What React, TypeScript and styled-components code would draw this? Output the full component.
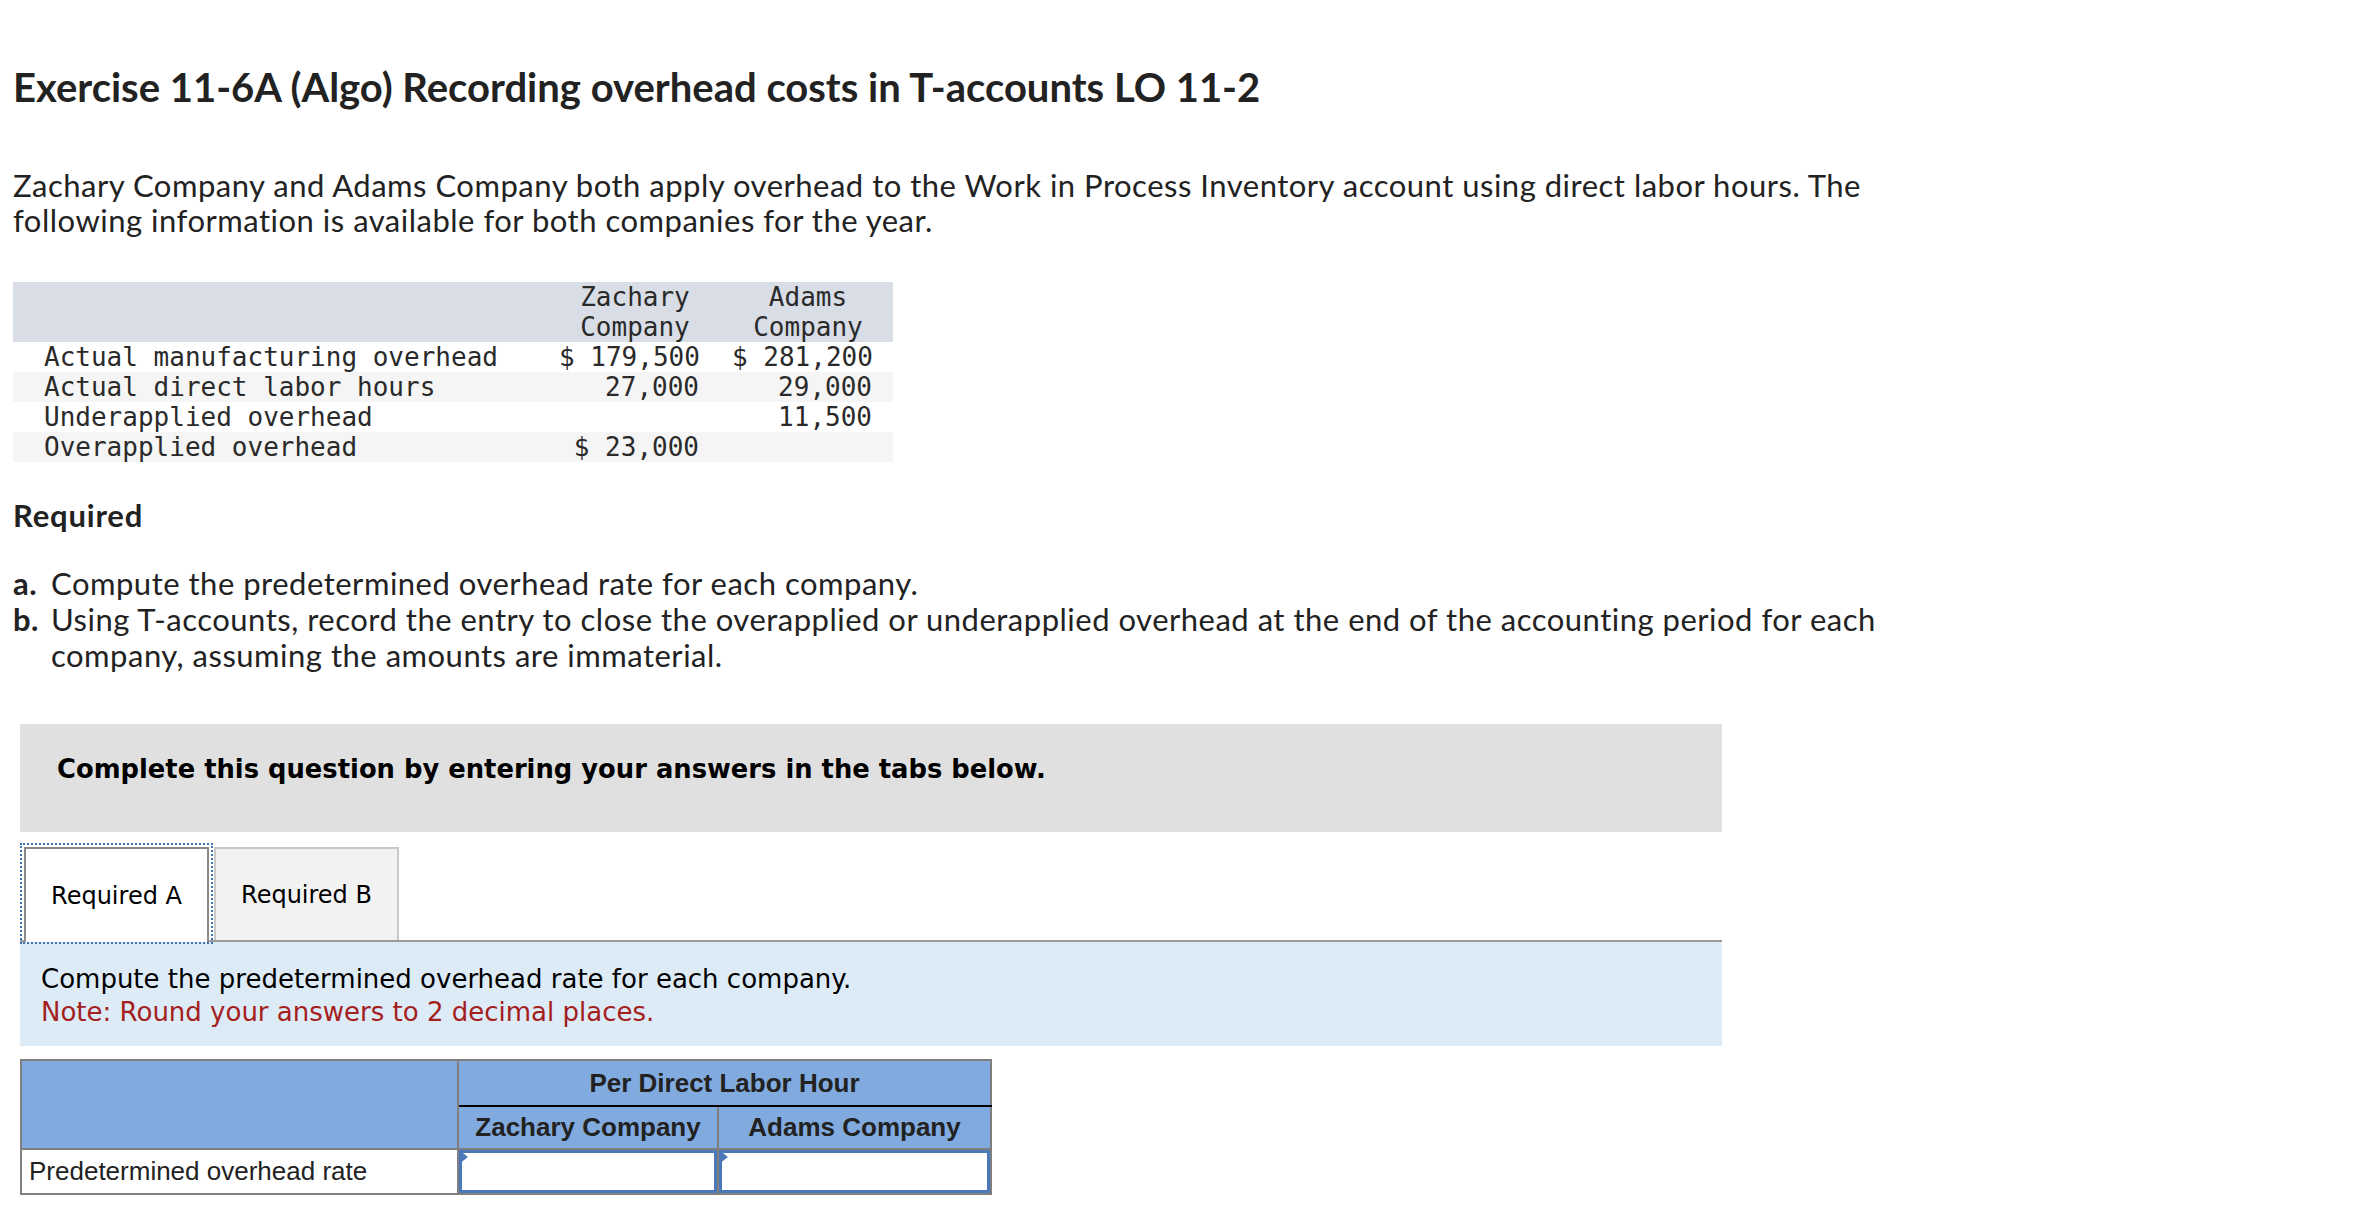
import styled, { createGlobalStyle } from "styled-components";

const GlobalStyle = createGlobalStyle`
    html, body {
        margin: 0;
        padding: 0;
        background: #ffffff;
    }
    body {
        font-family: "Lato", "Liberation Sans", sans-serif;
        color: #222222;
    }
`;

const Page = styled.div`
    padding: 0 13px 40px 13px;
    width: 1900px;
`;

const Title = styled.h1`
    margin: 63px 0 0 0;
    font-size: 40px;
    line-height: 48px;
    font-weight: 700;
    color: #222;
`;

const Intro = styled.p`
    margin: 57px 0 0 0;
    font-size: 31px;
    line-height: 35px;
    letter-spacing: 0.5px;
`;

const DataTable = styled.div`
    margin-top: 44px;
    width: 880px;
    font-family: "DejaVu Sans Mono", "Liberation Mono", monospace;
    font-size: 26px;
    line-height: 30px;
    color: #2a2a2a;
`;

const DataRow = styled.div<{ $shade?: string }>`
    display: grid;
    grid-template-columns: 482px 140px 140px;
    column-gap: 33px;
    padding: 0 21px 0 31px;
    background: ${(p) => p.$shade || "transparent"};
    white-space: pre;
`;

const HeadCell = styled.div`
    padding-left: 12px;
    text-align: center;
`;

const Label = styled.div``;

const Amount = styled.div`
    text-align: right;
`;

const Required = styled.h2`
    margin: 36px 0 0 0;
    font-size: 31px;
    line-height: 35px;
    font-weight: 700;
    letter-spacing: 0.8px;
`;

const ReqList = styled.ol`
    list-style: none;
    margin: 32px 0 0 0;
    padding: 0;
    font-size: 31px;
    line-height: 36px;
    letter-spacing: 0.5px;
`;

const ReqItem = styled.li`
    display: grid;
    grid-template-columns: 38px 1fr;
`;

const Letter = styled.b`
    font-weight: 700;
`;

const Instruction = styled.div`
    margin: 51px 0 0 7px;
    width: 1702px;
    box-sizing: border-box;
    padding: 30px 37px 48px;
    background: #e0e0e0;
    font-family: "DejaVu Sans", Verdana, sans-serif;
    font-weight: 700;
    font-size: 25.8px;
    line-height: 30px;
    color: #000;
`;

const TabBar = styled.div`
    margin: 11px 0 0 7px;
    width: 1702px;
    padding-top: 4px;
    display: flex;
    align-items: flex-end;
    border-bottom: 2px solid #999999;
    font-family: "DejaVu Sans", Verdana, sans-serif;
    font-size: 24px;
    color: #000;
`;

const Tab = styled.div<{ $active?: boolean }>`
    position: relative;
    width: 185px;
    height: ${(p) => (p.$active ? "95px" : "93px")};
    box-sizing: border-box;
    display: flex;
    align-items: center;
    justify-content: center;
    margin-left: ${(p) => (p.$active ? "4px" : "5px")};
    margin-bottom: ${(p) => (p.$active ? "-2px" : "0")};
    background: ${(p) => (p.$active ? "#ffffff" : "#f2f2f2")};
    border: 2px solid ${(p) => (p.$active ? "#8a8a8a" : "#c8c8c8")};
    border-bottom: 0;

    &::after {
        content: "";
        display: ${(p) => (p.$active ? "block" : "none")};
        position: absolute;
        left: -6px;
        right: -6px;
        top: -6px;
        bottom: -2px;
        border: 2px dotted #3f72b5;
    }
`;

const Panel = styled.div`
    margin-left: 7px;
    width: 1702px;
    box-sizing: border-box;
    padding: 21px 21px 17px;
    background: #ddebf7;
    font-family: "DejaVu Sans", Verdana, sans-serif;
    font-size: 26px;
    line-height: 33px;
    color: #000;
`;

const Note = styled.div`
    color: #a3201d;
`;

const AnswerTable = styled.table`
    margin: 13px 0 0 7px;
    border-collapse: collapse;
    font-family: "Liberation Sans", Arial, sans-serif;
    font-size: 26px;
    color: #222;
`;

const Th = styled.th<{ $w?: number; $h?: number; $rule?: boolean }>`
    width: ${(p) => (p.$w ? p.$w + "px" : "auto")};
    height: ${(p) => (p.$h ? p.$h + "px" : "auto")};
    padding: 0;
    background: #81abdf;
    border: 2px solid #7f7f7f;
    border-bottom: 2px solid ${(p) => (p.$rule ? "#000000" : "#7f7f7f")};
    font-weight: 700;
    text-align: center;
`;

const Td = styled.td`
    height: 43px;
    padding: 0 0 0 7px;
    border: 2px solid #7f7f7f;
    background: #ffffff;
    text-align: left;
    font-weight: 400;
`;

const InputCell = styled.td`
    padding: 0;
    border: 2px solid #7f7f7f;
    background: #ffffff;
`;

const Entry = styled.div`
    position: relative;
    height: 43px;
    box-sizing: border-box;
    border: 3px solid #4a78b9;
    background: #ffffff;

    &::before {
        content: "";
        position: absolute;
        left: -3px;
        top: -3px;
        border-top: 7px solid transparent;
        border-bottom: 7px solid transparent;
        border-left: 9px solid #4a78b9;
    }
`;

const rows = [
    { label: "Actual manufacturing overhead", z: "$ 179,500", a: "$ 281,200", shade: "#ffffff" },
    { label: "Actual direct labor hours", z: "27,000", a: "29,000", shade: "#f5f5f5" },
    { label: "Underapplied overhead", z: "", a: "11,500", shade: "#ffffff" },
    { label: "Overapplied overhead", z: "$ 23,000", a: "", shade: "#f5f5f5" },
];

export default function App() {
    return (
        <>
            <GlobalStyle />
            <Page>
                <Title>Exercise 11-6A (Algo) Recording overhead costs in T-accounts LO 11-2</Title>
                <Intro>
                    Zachary Company and Adams Company both apply overhead to the Work in Process Inventory account using direct labor hours. The following information is available for both companies for the year.
                </Intro>

                <DataTable>
                    <DataRow $shade="#d9dde6">
                        <Label></Label>
                        <HeadCell>Zachary{"\n"}Company</HeadCell>
                        <HeadCell>Adams{"\n"}Company</HeadCell>
                    </DataRow>
                    {rows.map((r) => (
                        <DataRow key={r.label} $shade={r.shade}>
                            <Label>{r.label}</Label>
                            <Amount>{r.z}</Amount>
                            <Amount>{r.a}</Amount>
                        </DataRow>
                    ))}
                </DataTable>

                <Required>Required</Required>
                <ReqList>
                    <ReqItem>
                        <Letter>a.</Letter>
                        <span>Compute the predetermined overhead rate for each company.</span>
                    </ReqItem>
                    <ReqItem>
                        <Letter>b.</Letter>
                        <span>Using T-accounts, record the entry to close the overapplied or underapplied overhead at the end of the accounting period for each company, assuming the amounts are immaterial.</span>
                    </ReqItem>
                </ReqList>

                <Instruction>Complete this question by entering your answers in the tabs below.</Instruction>

                <TabBar>
                    <Tab $active>Required A</Tab>
                    <Tab>Required B</Tab>
                </TabBar>
                <Panel>
                    <div>Compute the predetermined overhead rate for each company.</div>
                    <Note>Note: Round your answers to 2 decimal places.</Note>
                </Panel>

                <AnswerTable>
                    <thead>
                        <tr>
                            <Th $w={435} rowSpan={2}></Th>
                            <Th colSpan={2} $h={44} $rule>Per Direct Labor Hour</Th>
                        </tr>
                        <tr>
                            <Th $w={258} $h={41}>Zachary Company</Th>
                            <Th $w={271} $h={41}>Adams Company</Th>
                        </tr>
                    </thead>
                    <tbody>
                        <tr>
                            <Td>Predetermined overhead rate</Td>
                            <InputCell><Entry /></InputCell>
                            <InputCell><Entry /></InputCell>
                        </tr>
                    </tbody>
                </AnswerTable>
            </Page>
        </>
    );
}
